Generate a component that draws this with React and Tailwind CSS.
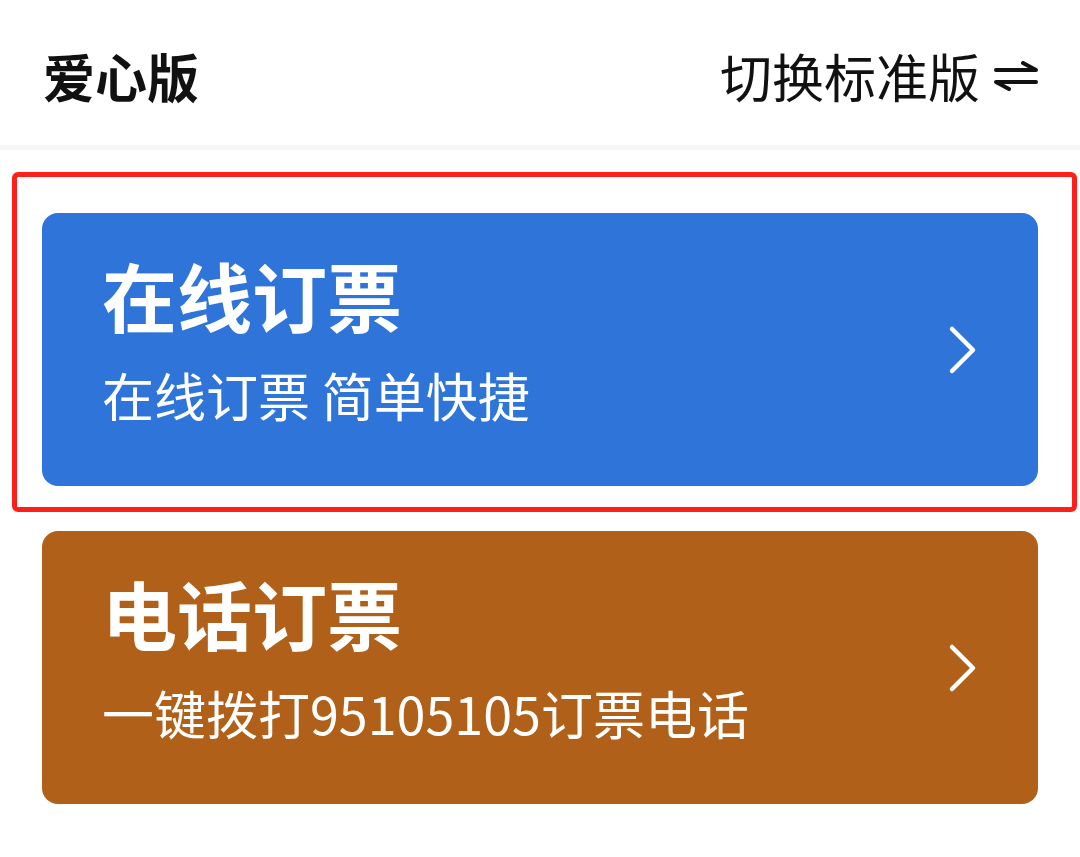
import React from "react";

const font = { fontFamily: '"Noto Sans CJK SC", "Noto Sans", sans-serif' };

function Chevron() {
  return (
    <svg width="30" height="50" viewBox="0 0 30 50" fill="none">
      <path d="M4 4 L25 25 L4 46" stroke="white" strokeWidth="4.5" strokeLinecap="round" strokeLinejoin="round" />
    </svg>
  );
}

function SwapIcon() {
  return (
    <svg width="44" height="30" viewBox="0 0 44 30" fill="none">
      <path d="M2 9 H42 L29 2" stroke="#111" strokeWidth="4" strokeLinecap="round" strokeLinejoin="round" />
      <path d="M42 21 H2 L15 28" stroke="#111" strokeWidth="4" strokeLinecap="round" strokeLinejoin="round" />
    </svg>
  );
}

function Card({ bg, title, subtitle }) {
  return (
    <div className={`w-[996px] h-[273px] rounded-[16px] ${bg} flex items-center justify-between pl-[60px] pr-[60px]`}>
      <div className="flex flex-col self-start pt-[44px]">
        <div className="text-[75px] leading-none font-bold text-white">{title}</div>
        <div className="text-[52px] leading-none text-white mt-[37px]">{subtitle}</div>
      </div>
      <Chevron />
    </div>
  );
}

export default function App() {
  return (
    <div className="w-[1080px] h-[857px] bg-white overflow-hidden" style={font}>
      <div className="h-[145px] flex items-center justify-between pl-[43px] pr-[42px] pt-[6px]">
        <div className="text-[52px] leading-none font-bold text-[#111]">爱心版</div>
        <div className="flex items-center gap-[14px]">
          <div className="text-[52px] leading-none text-[#111]">切换标准版</div>
          <SwapIcon />
        </div>
      </div>
      <div className="h-[5px] bg-[#f6f6f6]"></div>
      <div className="pl-[12px] pt-[22px]">
        <div className="w-[1065px] h-[340px] border-[5px] border-[#ff1f1a] rounded-[6px] pl-[25px] pt-[36px]">
          <Card bg="bg-[#2e74d9]" title="在线订票" subtitle="在线订票 简单快捷" />
        </div>
        <div className="pl-[30px] mt-[19px]">
          <Card bg="bg-[#b06018]" title="电话订票" subtitle="一键拨打95105105订票电话" />
        </div>
      </div>
    </div>
  );
}
